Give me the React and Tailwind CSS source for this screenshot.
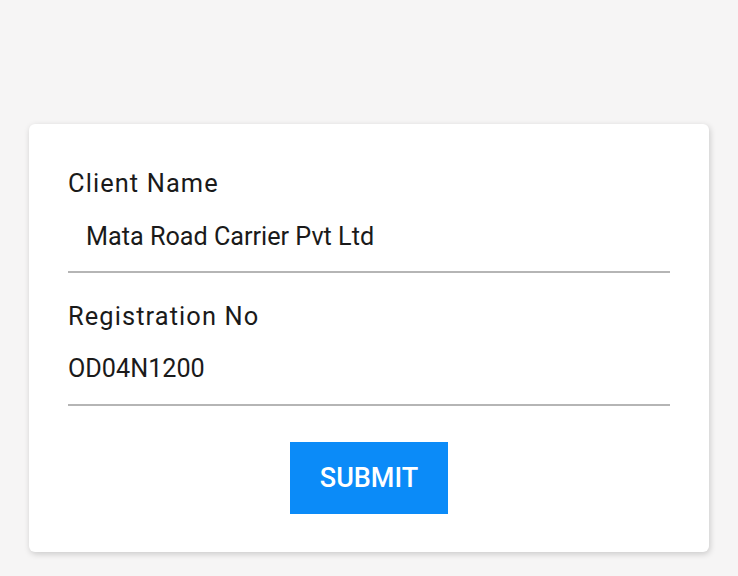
export default function App() {
  return (
    <div
      className="min-h-[576px] w-full bg-[#f6f5f5] pt-[124px] px-[29px]"
      style={{ fontFamily: "Roboto, 'Noto Sans', sans-serif" }}
    >
      <div className="w-[680px] rounded-[6px] bg-white pt-[44px] pb-[38px] px-[39px] shadow-[1px_2px_6px_rgba(0,0,0,0.18)]">
        <div className="text-[25.4px] leading-[30px] tracking-[1.1px] text-[#1a1a1a]">Client Name</div>
        <div className="mt-[24px] border-b-2 border-[#b5b5b5] pb-[19px] pl-[18px] text-[25.2px] leading-[30px] text-[#1a1a1a]">
          Mata Road Carrier Pvt Ltd
        </div>
        <div className="mt-[28px] text-[25.4px] leading-[30px] tracking-[1.1px] text-[#1a1a1a]">Registration No</div>
        <div className="mt-[23px] border-b-2 border-[#b5b5b5] pb-[20px] text-[25.2px] leading-[30px] text-[#1a1a1a]">
          OD04N1200
        </div>
        <div className="mt-[36px] flex justify-center">
          <button className="h-[72px] w-[158px] bg-[#0b8bf8] text-[27px] font-medium text-white">
            SUBMIT
          </button>
        </div>
      </div>
    </div>
  );
}
